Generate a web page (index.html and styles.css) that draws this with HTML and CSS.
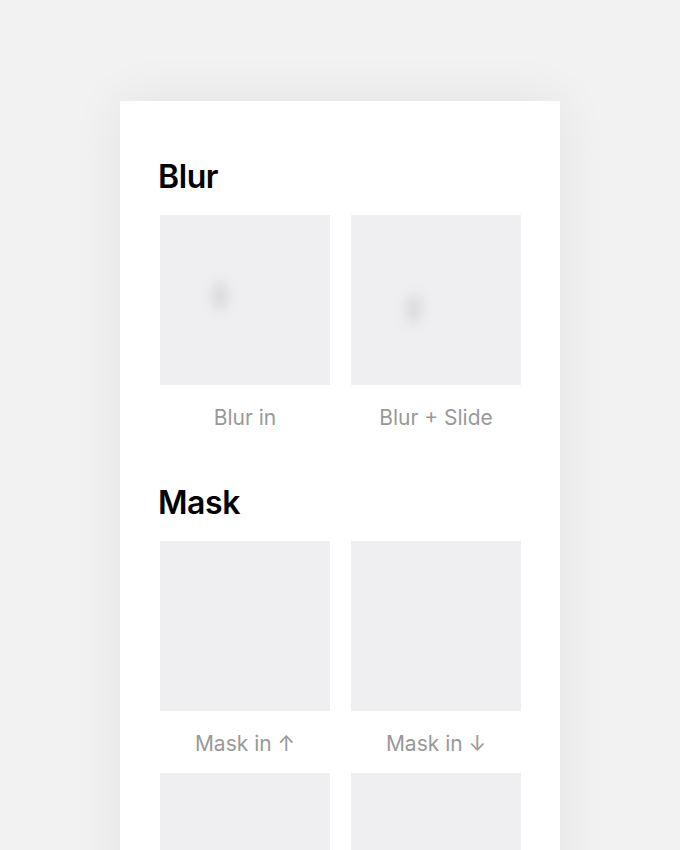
FILE: index.html
```html
<!DOCTYPE html>
<html>
<head>
	<title>Text Animations</title>
	<link rel="stylesheet" href="styles.css">
</head>
<body>
	<div class="sheet">
		<section class="group">
			<h2>Blur</h2>
			<div class="grid">
				<div class="item">
					<div class="preview"><span class="ghost ghost-a"></span></div>
					<p>Blur in</p>
				</div>
				<div class="item">
					<div class="preview"><span class="ghost ghost-b"></span></div>
					<p>Blur + Slide</p>
				</div>
			</div>
		</section>
		<section class="group">
			<h2>Mask</h2>
			<div class="grid">
				<div class="item">
					<div class="preview"></div>
					<p>Mask in ↑</p>
				</div>
				<div class="item">
					<div class="preview"></div>
					<p>Mask in ↓</p>
				</div>
				<div class="item">
					<div class="preview"></div>
				</div>
				<div class="item">
					<div class="preview"></div>
				</div>
			</div>
		</section>
	</div>
</body>
</html>
```

FILE: styles.css
```css
html,
body {
	background-color: #f2f2f2;
	font-family: Inter, "Liberation Sans", sans-serif;
	height: 100%;
	margin: 0;
	overflow: hidden;
	padding: 0;
}

.sheet {
	background-color: #fff;
	box-shadow: 0 0 50px rgba(0,0,0,0.07);
	box-sizing: border-box;
	margin: 101px auto 0;
	min-height: 900px;
	padding: 56px 40px 40px;
	width: 440px;
}

.group + .group {
	margin-top: 51px;
}

h2 {
	color: #000;
	font-size: 32px;
	font-weight: 600;
	letter-spacing: -0.4px;
	line-height: 40px;
	margin: 0 0 18px -2px;
}

.grid {
	display: grid;
	gap: 15px 21px;
	grid-template-columns: 170px 170px;
}

.preview {
	background-color: #efeff1;
	height: 170px;
	position: relative;
}

.ghost {
	background-color: #dadadc;
	border-radius: 50% 50% 45% 45%;
	filter: blur(6px);
	height: 28px;
	position: absolute;
	width: 16px;
}

.ghost-a {
	left: 52px;
	top: 67px;
}

.ghost-b {
	left: 55px;
	top: 80px;
}

.item p {
	color: #999;
	font-size: 21px;
	line-height: 28px;
	margin: 19px 0 0;
	text-align: center;
}
```
